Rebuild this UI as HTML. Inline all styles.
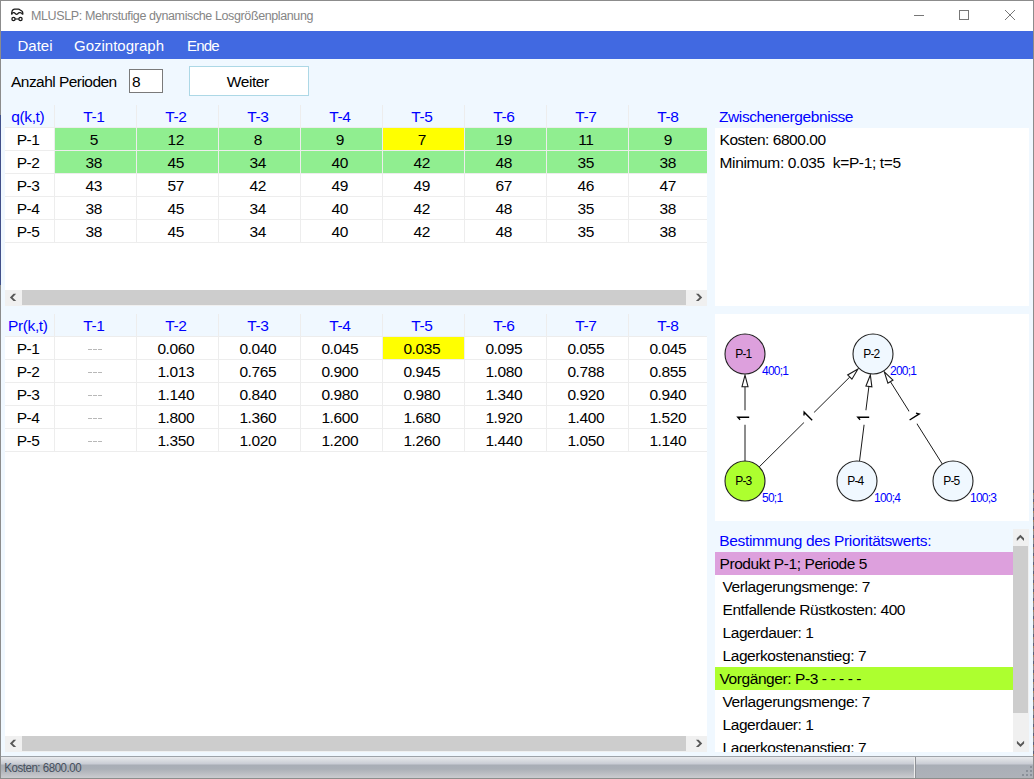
<!DOCTYPE html>
<html><head><meta charset="utf-8"><title>MLUSLP</title>
<style>
html,body{margin:0;padding:0}
body{width:1034px;height:779px;overflow:hidden;position:relative;background:#F0F8FF;font-family:"Liberation Sans", sans-serif}
.r{position:absolute}
.t{position:absolute;white-space:pre;line-height:normal}
</style></head><body>
<div class="r" style="left:0px;top:0px;width:1034px;height:31px;background:#fff;"></div>
<svg class="r" style="left:6px;top:5px" width="24" height="20" viewBox="0 0 24 20">
<path d="M5.7 9.6 V8 Q5.9 5.6 7.2 4.6 Q7.8 4.2 8.6 4.2 H12.3 Q13.3 4.2 14.2 5.0 Q15.0 5.6 15.8 6.0 Q16.8 6.6 16.8 8.2 V9.6" fill="none" stroke="#1a1a1a" stroke-width="1.3"/>
<path d="M5.7 9.4 C6.0 7.4, 8.4 7.0, 9.4 8.8 Q10.6 10.0 11.8 8.8 C12.8 7.0, 15.8 7.4, 16.6 9.4" fill="none" stroke="#1a1a1a" stroke-width="1.3"/>
<circle cx="7.5" cy="14" r="1.6" fill="none" stroke="#1a1a1a" stroke-width="1.3"/>
<circle cx="14.5" cy="14" r="1.6" fill="none" stroke="#1a1a1a" stroke-width="1.3"/>
<path d="M9 14 H13" stroke="#1a1a1a" stroke-width="1.1"/>
</svg>
<div class="t" style="left:31px;top:8.99px;font-size:12.5px;color:#858585;letter-spacing:-0.385px;">MLUSLP: Mehrstufige dynamische Losgrößenplanung</div>
<div class="r" style="left:914px;top:15px;width:10px;height:1px;background:#777;"></div>
<div class="r" style="left:959px;top:10px;width:8px;height:8px;border:1px solid #777"></div>
<svg class="r" style="left:1004px;top:9px" width="12" height="12" viewBox="0 0 12 12">
<path d="M1 1 L11 11 M11 1 L1 11" stroke="#777" stroke-width="1"/></svg>
<div class="r" style="left:0px;top:31px;width:1034px;height:28px;background:#4169E1;"></div>
<div class="t" style="left:17.5px;top:37.42px;font-size:15px;color:#fff;letter-spacing:0px;">Datei</div>
<div class="t" style="left:74px;top:37.42px;font-size:15px;color:#fff;letter-spacing:0px;">Gozintograph</div>
<div class="t" style="left:187px;top:37.42px;font-size:15px;color:#fff;letter-spacing:-0.8px;">Ende</div>
<div class="t" style="left:11px;top:72.97px;font-size:15.5px;color:#000;letter-spacing:-0.54px;">Anzahl Perioden</div>
<div class="r" style="left:129px;top:69px;width:32px;height:22px;border:1px solid #7a7a7a;background:#fff"></div>
<div class="t" style="left:132px;top:72.97px;font-size:15.5px;color:#000;letter-spacing:-0.4px;">8</div>
<div class="r" style="left:189px;top:66px;width:118px;height:28px;border:1px solid #ADD8E6;background:#fff"></div>
<div class="t" style="left:187.78px;width:120px;text-align:center;top:72.97px;font-size:15.5px;color:#000;letter-spacing:-0.44px;">Weiter</div>
<div class="r" style="left:0;top:0;width:707px;height:779px;overflow:hidden">
<div class="r" style="left:5px;top:128px;width:702px;height:162px;background:#fff;"></div>
<div class="r" style="left:54px;top:105px;width:1px;height:22px;background:#EDEDED;"></div>
<div class="r" style="left:136px;top:105px;width:1px;height:22px;background:#EDEDED;"></div>
<div class="r" style="left:218px;top:105px;width:1px;height:22px;background:#EDEDED;"></div>
<div class="r" style="left:300px;top:105px;width:1px;height:22px;background:#EDEDED;"></div>
<div class="r" style="left:382px;top:105px;width:1px;height:22px;background:#EDEDED;"></div>
<div class="r" style="left:464px;top:105px;width:1px;height:22px;background:#EDEDED;"></div>
<div class="r" style="left:546px;top:105px;width:1px;height:22px;background:#EDEDED;"></div>
<div class="r" style="left:628px;top:105px;width:1px;height:22px;background:#EDEDED;"></div>
<div class="r" style="left:5px;top:127px;width:702px;height:1px;background:#EDEDED;"></div>
<div class="t" style="left:2.80px;width:50px;text-align:center;top:107.77px;font-size:15.5px;color:#0000FF;letter-spacing:-0.4px;">q(k,t)</div>
<div class="t" style="left:53.80px;width:80px;text-align:center;top:107.77px;font-size:15.5px;color:#0000FF;letter-spacing:-0.4px;">T-1</div>
<div class="t" style="left:135.80px;width:80px;text-align:center;top:107.77px;font-size:15.5px;color:#0000FF;letter-spacing:-0.4px;">T-2</div>
<div class="t" style="left:217.80px;width:80px;text-align:center;top:107.77px;font-size:15.5px;color:#0000FF;letter-spacing:-0.4px;">T-3</div>
<div class="t" style="left:299.80px;width:80px;text-align:center;top:107.77px;font-size:15.5px;color:#0000FF;letter-spacing:-0.4px;">T-4</div>
<div class="t" style="left:381.80px;width:80px;text-align:center;top:107.77px;font-size:15.5px;color:#0000FF;letter-spacing:-0.4px;">T-5</div>
<div class="t" style="left:463.80px;width:80px;text-align:center;top:107.77px;font-size:15.5px;color:#0000FF;letter-spacing:-0.4px;">T-6</div>
<div class="t" style="left:545.80px;width:80px;text-align:center;top:107.77px;font-size:15.5px;color:#0000FF;letter-spacing:-0.4px;">T-7</div>
<div class="t" style="left:627.80px;width:80px;text-align:center;top:107.77px;font-size:15.5px;color:#0000FF;letter-spacing:-0.4px;">T-8</div>
<div class="r" style="left:55px;top:128px;width:81px;height:22px;background:#90EE90;"></div>
<div class="r" style="left:137px;top:128px;width:81px;height:22px;background:#90EE90;"></div>
<div class="r" style="left:219px;top:128px;width:81px;height:22px;background:#90EE90;"></div>
<div class="r" style="left:301px;top:128px;width:81px;height:22px;background:#90EE90;"></div>
<div class="r" style="left:383px;top:128px;width:81px;height:22px;background:#FFFF00;"></div>
<div class="r" style="left:465px;top:128px;width:81px;height:22px;background:#90EE90;"></div>
<div class="r" style="left:547px;top:128px;width:81px;height:22px;background:#90EE90;"></div>
<div class="r" style="left:629px;top:128px;width:81px;height:22px;background:#90EE90;"></div>
<div class="r" style="left:5px;top:150px;width:702px;height:1px;background:#EDEDED;"></div>
<div class="r" style="left:54px;top:128px;width:1px;height:23px;background:#EDEDED;"></div>
<div class="r" style="left:136px;top:128px;width:1px;height:23px;background:#EDEDED;"></div>
<div class="r" style="left:218px;top:128px;width:1px;height:23px;background:#EDEDED;"></div>
<div class="r" style="left:300px;top:128px;width:1px;height:23px;background:#EDEDED;"></div>
<div class="r" style="left:382px;top:128px;width:1px;height:23px;background:#EDEDED;"></div>
<div class="r" style="left:464px;top:128px;width:1px;height:23px;background:#EDEDED;"></div>
<div class="r" style="left:546px;top:128px;width:1px;height:23px;background:#EDEDED;"></div>
<div class="r" style="left:628px;top:128px;width:1px;height:23px;background:#EDEDED;"></div>
<div class="t" style="left:3.10px;width:50px;text-align:center;top:130.77px;font-size:15.5px;color:#000;letter-spacing:-0.4px;">P-1</div>
<div class="t" style="left:53.80px;width:80px;text-align:center;top:130.77px;font-size:15.5px;color:#000;letter-spacing:-0.4px;">5</div>
<div class="t" style="left:135.80px;width:80px;text-align:center;top:130.77px;font-size:15.5px;color:#000;letter-spacing:-0.4px;">12</div>
<div class="t" style="left:217.80px;width:80px;text-align:center;top:130.77px;font-size:15.5px;color:#000;letter-spacing:-0.4px;">8</div>
<div class="t" style="left:299.80px;width:80px;text-align:center;top:130.77px;font-size:15.5px;color:#000;letter-spacing:-0.4px;">9</div>
<div class="t" style="left:381.80px;width:80px;text-align:center;top:130.77px;font-size:15.5px;color:#000;letter-spacing:-0.4px;">7</div>
<div class="t" style="left:463.80px;width:80px;text-align:center;top:130.77px;font-size:15.5px;color:#000;letter-spacing:-0.4px;">19</div>
<div class="t" style="left:545.80px;width:80px;text-align:center;top:130.77px;font-size:15.5px;color:#000;letter-spacing:-0.4px;">11</div>
<div class="t" style="left:627.80px;width:80px;text-align:center;top:130.77px;font-size:15.5px;color:#000;letter-spacing:-0.4px;">9</div>
<div class="r" style="left:55px;top:151px;width:81px;height:22px;background:#90EE90;"></div>
<div class="r" style="left:137px;top:151px;width:81px;height:22px;background:#90EE90;"></div>
<div class="r" style="left:219px;top:151px;width:81px;height:22px;background:#90EE90;"></div>
<div class="r" style="left:301px;top:151px;width:81px;height:22px;background:#90EE90;"></div>
<div class="r" style="left:383px;top:151px;width:81px;height:22px;background:#90EE90;"></div>
<div class="r" style="left:465px;top:151px;width:81px;height:22px;background:#90EE90;"></div>
<div class="r" style="left:547px;top:151px;width:81px;height:22px;background:#90EE90;"></div>
<div class="r" style="left:629px;top:151px;width:81px;height:22px;background:#90EE90;"></div>
<div class="r" style="left:5px;top:173px;width:702px;height:1px;background:#EDEDED;"></div>
<div class="r" style="left:54px;top:151px;width:1px;height:23px;background:#EDEDED;"></div>
<div class="r" style="left:136px;top:151px;width:1px;height:23px;background:#EDEDED;"></div>
<div class="r" style="left:218px;top:151px;width:1px;height:23px;background:#EDEDED;"></div>
<div class="r" style="left:300px;top:151px;width:1px;height:23px;background:#EDEDED;"></div>
<div class="r" style="left:382px;top:151px;width:1px;height:23px;background:#EDEDED;"></div>
<div class="r" style="left:464px;top:151px;width:1px;height:23px;background:#EDEDED;"></div>
<div class="r" style="left:546px;top:151px;width:1px;height:23px;background:#EDEDED;"></div>
<div class="r" style="left:628px;top:151px;width:1px;height:23px;background:#EDEDED;"></div>
<div class="t" style="left:3.10px;width:50px;text-align:center;top:153.77px;font-size:15.5px;color:#000;letter-spacing:-0.4px;">P-2</div>
<div class="t" style="left:53.80px;width:80px;text-align:center;top:153.77px;font-size:15.5px;color:#000;letter-spacing:-0.4px;">38</div>
<div class="t" style="left:135.80px;width:80px;text-align:center;top:153.77px;font-size:15.5px;color:#000;letter-spacing:-0.4px;">45</div>
<div class="t" style="left:217.80px;width:80px;text-align:center;top:153.77px;font-size:15.5px;color:#000;letter-spacing:-0.4px;">34</div>
<div class="t" style="left:299.80px;width:80px;text-align:center;top:153.77px;font-size:15.5px;color:#000;letter-spacing:-0.4px;">40</div>
<div class="t" style="left:381.80px;width:80px;text-align:center;top:153.77px;font-size:15.5px;color:#000;letter-spacing:-0.4px;">42</div>
<div class="t" style="left:463.80px;width:80px;text-align:center;top:153.77px;font-size:15.5px;color:#000;letter-spacing:-0.4px;">48</div>
<div class="t" style="left:545.80px;width:80px;text-align:center;top:153.77px;font-size:15.5px;color:#000;letter-spacing:-0.4px;">35</div>
<div class="t" style="left:627.80px;width:80px;text-align:center;top:153.77px;font-size:15.5px;color:#000;letter-spacing:-0.4px;">38</div>
<div class="r" style="left:5px;top:196px;width:702px;height:1px;background:#EDEDED;"></div>
<div class="r" style="left:54px;top:174px;width:1px;height:23px;background:#EDEDED;"></div>
<div class="r" style="left:136px;top:174px;width:1px;height:23px;background:#EDEDED;"></div>
<div class="r" style="left:218px;top:174px;width:1px;height:23px;background:#EDEDED;"></div>
<div class="r" style="left:300px;top:174px;width:1px;height:23px;background:#EDEDED;"></div>
<div class="r" style="left:382px;top:174px;width:1px;height:23px;background:#EDEDED;"></div>
<div class="r" style="left:464px;top:174px;width:1px;height:23px;background:#EDEDED;"></div>
<div class="r" style="left:546px;top:174px;width:1px;height:23px;background:#EDEDED;"></div>
<div class="r" style="left:628px;top:174px;width:1px;height:23px;background:#EDEDED;"></div>
<div class="t" style="left:3.10px;width:50px;text-align:center;top:176.77px;font-size:15.5px;color:#000;letter-spacing:-0.4px;">P-3</div>
<div class="t" style="left:53.80px;width:80px;text-align:center;top:176.77px;font-size:15.5px;color:#000;letter-spacing:-0.4px;">43</div>
<div class="t" style="left:135.80px;width:80px;text-align:center;top:176.77px;font-size:15.5px;color:#000;letter-spacing:-0.4px;">57</div>
<div class="t" style="left:217.80px;width:80px;text-align:center;top:176.77px;font-size:15.5px;color:#000;letter-spacing:-0.4px;">42</div>
<div class="t" style="left:299.80px;width:80px;text-align:center;top:176.77px;font-size:15.5px;color:#000;letter-spacing:-0.4px;">49</div>
<div class="t" style="left:381.80px;width:80px;text-align:center;top:176.77px;font-size:15.5px;color:#000;letter-spacing:-0.4px;">49</div>
<div class="t" style="left:463.80px;width:80px;text-align:center;top:176.77px;font-size:15.5px;color:#000;letter-spacing:-0.4px;">67</div>
<div class="t" style="left:545.80px;width:80px;text-align:center;top:176.77px;font-size:15.5px;color:#000;letter-spacing:-0.4px;">46</div>
<div class="t" style="left:627.80px;width:80px;text-align:center;top:176.77px;font-size:15.5px;color:#000;letter-spacing:-0.4px;">47</div>
<div class="r" style="left:5px;top:219px;width:702px;height:1px;background:#EDEDED;"></div>
<div class="r" style="left:54px;top:197px;width:1px;height:23px;background:#EDEDED;"></div>
<div class="r" style="left:136px;top:197px;width:1px;height:23px;background:#EDEDED;"></div>
<div class="r" style="left:218px;top:197px;width:1px;height:23px;background:#EDEDED;"></div>
<div class="r" style="left:300px;top:197px;width:1px;height:23px;background:#EDEDED;"></div>
<div class="r" style="left:382px;top:197px;width:1px;height:23px;background:#EDEDED;"></div>
<div class="r" style="left:464px;top:197px;width:1px;height:23px;background:#EDEDED;"></div>
<div class="r" style="left:546px;top:197px;width:1px;height:23px;background:#EDEDED;"></div>
<div class="r" style="left:628px;top:197px;width:1px;height:23px;background:#EDEDED;"></div>
<div class="t" style="left:3.10px;width:50px;text-align:center;top:199.77px;font-size:15.5px;color:#000;letter-spacing:-0.4px;">P-4</div>
<div class="t" style="left:53.80px;width:80px;text-align:center;top:199.77px;font-size:15.5px;color:#000;letter-spacing:-0.4px;">38</div>
<div class="t" style="left:135.80px;width:80px;text-align:center;top:199.77px;font-size:15.5px;color:#000;letter-spacing:-0.4px;">45</div>
<div class="t" style="left:217.80px;width:80px;text-align:center;top:199.77px;font-size:15.5px;color:#000;letter-spacing:-0.4px;">34</div>
<div class="t" style="left:299.80px;width:80px;text-align:center;top:199.77px;font-size:15.5px;color:#000;letter-spacing:-0.4px;">40</div>
<div class="t" style="left:381.80px;width:80px;text-align:center;top:199.77px;font-size:15.5px;color:#000;letter-spacing:-0.4px;">42</div>
<div class="t" style="left:463.80px;width:80px;text-align:center;top:199.77px;font-size:15.5px;color:#000;letter-spacing:-0.4px;">48</div>
<div class="t" style="left:545.80px;width:80px;text-align:center;top:199.77px;font-size:15.5px;color:#000;letter-spacing:-0.4px;">35</div>
<div class="t" style="left:627.80px;width:80px;text-align:center;top:199.77px;font-size:15.5px;color:#000;letter-spacing:-0.4px;">38</div>
<div class="r" style="left:5px;top:242px;width:702px;height:1px;background:#EDEDED;"></div>
<div class="r" style="left:54px;top:220px;width:1px;height:23px;background:#EDEDED;"></div>
<div class="r" style="left:136px;top:220px;width:1px;height:23px;background:#EDEDED;"></div>
<div class="r" style="left:218px;top:220px;width:1px;height:23px;background:#EDEDED;"></div>
<div class="r" style="left:300px;top:220px;width:1px;height:23px;background:#EDEDED;"></div>
<div class="r" style="left:382px;top:220px;width:1px;height:23px;background:#EDEDED;"></div>
<div class="r" style="left:464px;top:220px;width:1px;height:23px;background:#EDEDED;"></div>
<div class="r" style="left:546px;top:220px;width:1px;height:23px;background:#EDEDED;"></div>
<div class="r" style="left:628px;top:220px;width:1px;height:23px;background:#EDEDED;"></div>
<div class="t" style="left:3.10px;width:50px;text-align:center;top:222.77px;font-size:15.5px;color:#000;letter-spacing:-0.4px;">P-5</div>
<div class="t" style="left:53.80px;width:80px;text-align:center;top:222.77px;font-size:15.5px;color:#000;letter-spacing:-0.4px;">38</div>
<div class="t" style="left:135.80px;width:80px;text-align:center;top:222.77px;font-size:15.5px;color:#000;letter-spacing:-0.4px;">45</div>
<div class="t" style="left:217.80px;width:80px;text-align:center;top:222.77px;font-size:15.5px;color:#000;letter-spacing:-0.4px;">34</div>
<div class="t" style="left:299.80px;width:80px;text-align:center;top:222.77px;font-size:15.5px;color:#000;letter-spacing:-0.4px;">40</div>
<div class="t" style="left:381.80px;width:80px;text-align:center;top:222.77px;font-size:15.5px;color:#000;letter-spacing:-0.4px;">42</div>
<div class="t" style="left:463.80px;width:80px;text-align:center;top:222.77px;font-size:15.5px;color:#000;letter-spacing:-0.4px;">48</div>
<div class="t" style="left:545.80px;width:80px;text-align:center;top:222.77px;font-size:15.5px;color:#000;letter-spacing:-0.4px;">35</div>
<div class="t" style="left:627.80px;width:80px;text-align:center;top:222.77px;font-size:15.5px;color:#000;letter-spacing:-0.4px;">38</div>
</div>
<div class="r" style="left:5px;top:290px;width:702px;height:16px;background:#F0F0F0;"></div>
<div class="r" style="left:22px;top:290px;width:664px;height:15px;background:#CDCDCD;"></div>
<svg class="r" style="left:8px;top:292px" width="10" height="11"><polygon points="8.20,1.80 4.60,5.40 8.20,9.00 5.50,9.00 1.90,5.40 5.50,1.80" fill="#585858"/></svg>
<svg class="r" style="left:694px;top:292px" width="10" height="11"><polygon points="1.90,1.80 5.50,5.40 1.90,9.00 4.60,9.00 8.20,5.40 4.60,1.80" fill="#585858"/></svg>
<div class="r" style="left:0;top:0;width:707px;height:779px;overflow:hidden">
<div class="r" style="left:5px;top:337px;width:702px;height:399px;background:#fff;"></div>
<div class="r" style="left:54px;top:314px;width:1px;height:22px;background:#EDEDED;"></div>
<div class="r" style="left:136px;top:314px;width:1px;height:22px;background:#EDEDED;"></div>
<div class="r" style="left:218px;top:314px;width:1px;height:22px;background:#EDEDED;"></div>
<div class="r" style="left:300px;top:314px;width:1px;height:22px;background:#EDEDED;"></div>
<div class="r" style="left:382px;top:314px;width:1px;height:22px;background:#EDEDED;"></div>
<div class="r" style="left:464px;top:314px;width:1px;height:22px;background:#EDEDED;"></div>
<div class="r" style="left:546px;top:314px;width:1px;height:22px;background:#EDEDED;"></div>
<div class="r" style="left:628px;top:314px;width:1px;height:22px;background:#EDEDED;"></div>
<div class="r" style="left:5px;top:336px;width:702px;height:1px;background:#EDEDED;"></div>
<div class="t" style="left:2.80px;width:50px;text-align:center;top:316.77px;font-size:15.5px;color:#0000FF;letter-spacing:-0.4px;">Pr(k,t)</div>
<div class="t" style="left:53.80px;width:80px;text-align:center;top:316.77px;font-size:15.5px;color:#0000FF;letter-spacing:-0.4px;">T-1</div>
<div class="t" style="left:135.80px;width:80px;text-align:center;top:316.77px;font-size:15.5px;color:#0000FF;letter-spacing:-0.4px;">T-2</div>
<div class="t" style="left:217.80px;width:80px;text-align:center;top:316.77px;font-size:15.5px;color:#0000FF;letter-spacing:-0.4px;">T-3</div>
<div class="t" style="left:299.80px;width:80px;text-align:center;top:316.77px;font-size:15.5px;color:#0000FF;letter-spacing:-0.4px;">T-4</div>
<div class="t" style="left:381.80px;width:80px;text-align:center;top:316.77px;font-size:15.5px;color:#0000FF;letter-spacing:-0.4px;">T-5</div>
<div class="t" style="left:463.80px;width:80px;text-align:center;top:316.77px;font-size:15.5px;color:#0000FF;letter-spacing:-0.4px;">T-6</div>
<div class="t" style="left:545.80px;width:80px;text-align:center;top:316.77px;font-size:15.5px;color:#0000FF;letter-spacing:-0.4px;">T-7</div>
<div class="t" style="left:627.80px;width:80px;text-align:center;top:316.77px;font-size:15.5px;color:#0000FF;letter-spacing:-0.4px;">T-8</div>
<div class="r" style="left:383px;top:337px;width:81px;height:22px;background:#FFFF00;"></div>
<div class="r" style="left:5px;top:359px;width:702px;height:1px;background:#EDEDED;"></div>
<div class="r" style="left:54px;top:337px;width:1px;height:23px;background:#EDEDED;"></div>
<div class="r" style="left:136px;top:337px;width:1px;height:23px;background:#EDEDED;"></div>
<div class="r" style="left:218px;top:337px;width:1px;height:23px;background:#EDEDED;"></div>
<div class="r" style="left:300px;top:337px;width:1px;height:23px;background:#EDEDED;"></div>
<div class="r" style="left:382px;top:337px;width:1px;height:23px;background:#EDEDED;"></div>
<div class="r" style="left:464px;top:337px;width:1px;height:23px;background:#EDEDED;"></div>
<div class="r" style="left:546px;top:337px;width:1px;height:23px;background:#EDEDED;"></div>
<div class="r" style="left:628px;top:337px;width:1px;height:23px;background:#EDEDED;"></div>
<div class="t" style="left:3.10px;width:50px;text-align:center;top:339.77px;font-size:15.5px;color:#000;letter-spacing:-0.4px;">P-1</div>
<div class="r" style="left:88px;top:349px;width:4px;height:1px;background:#b8b8b8;"></div>
<div class="r" style="left:93px;top:349px;width:4px;height:1px;background:#b8b8b8;"></div>
<div class="r" style="left:98px;top:349px;width:4px;height:1px;background:#b8b8b8;"></div>
<div class="t" style="left:135.80px;width:80px;text-align:center;top:339.77px;font-size:15.5px;color:#000;letter-spacing:-0.4px;">0.060</div>
<div class="t" style="left:217.80px;width:80px;text-align:center;top:339.77px;font-size:15.5px;color:#000;letter-spacing:-0.4px;">0.040</div>
<div class="t" style="left:299.80px;width:80px;text-align:center;top:339.77px;font-size:15.5px;color:#000;letter-spacing:-0.4px;">0.045</div>
<div class="t" style="left:381.80px;width:80px;text-align:center;top:339.77px;font-size:15.5px;color:#000;letter-spacing:-0.4px;">0.035</div>
<div class="t" style="left:463.80px;width:80px;text-align:center;top:339.77px;font-size:15.5px;color:#000;letter-spacing:-0.4px;">0.095</div>
<div class="t" style="left:545.80px;width:80px;text-align:center;top:339.77px;font-size:15.5px;color:#000;letter-spacing:-0.4px;">0.055</div>
<div class="t" style="left:627.80px;width:80px;text-align:center;top:339.77px;font-size:15.5px;color:#000;letter-spacing:-0.4px;">0.045</div>
<div class="r" style="left:5px;top:382px;width:702px;height:1px;background:#EDEDED;"></div>
<div class="r" style="left:54px;top:360px;width:1px;height:23px;background:#EDEDED;"></div>
<div class="r" style="left:136px;top:360px;width:1px;height:23px;background:#EDEDED;"></div>
<div class="r" style="left:218px;top:360px;width:1px;height:23px;background:#EDEDED;"></div>
<div class="r" style="left:300px;top:360px;width:1px;height:23px;background:#EDEDED;"></div>
<div class="r" style="left:382px;top:360px;width:1px;height:23px;background:#EDEDED;"></div>
<div class="r" style="left:464px;top:360px;width:1px;height:23px;background:#EDEDED;"></div>
<div class="r" style="left:546px;top:360px;width:1px;height:23px;background:#EDEDED;"></div>
<div class="r" style="left:628px;top:360px;width:1px;height:23px;background:#EDEDED;"></div>
<div class="t" style="left:3.10px;width:50px;text-align:center;top:362.77px;font-size:15.5px;color:#000;letter-spacing:-0.4px;">P-2</div>
<div class="r" style="left:88px;top:372px;width:4px;height:1px;background:#b8b8b8;"></div>
<div class="r" style="left:93px;top:372px;width:4px;height:1px;background:#b8b8b8;"></div>
<div class="r" style="left:98px;top:372px;width:4px;height:1px;background:#b8b8b8;"></div>
<div class="t" style="left:135.80px;width:80px;text-align:center;top:362.77px;font-size:15.5px;color:#000;letter-spacing:-0.4px;">1.013</div>
<div class="t" style="left:217.80px;width:80px;text-align:center;top:362.77px;font-size:15.5px;color:#000;letter-spacing:-0.4px;">0.765</div>
<div class="t" style="left:299.80px;width:80px;text-align:center;top:362.77px;font-size:15.5px;color:#000;letter-spacing:-0.4px;">0.900</div>
<div class="t" style="left:381.80px;width:80px;text-align:center;top:362.77px;font-size:15.5px;color:#000;letter-spacing:-0.4px;">0.945</div>
<div class="t" style="left:463.80px;width:80px;text-align:center;top:362.77px;font-size:15.5px;color:#000;letter-spacing:-0.4px;">1.080</div>
<div class="t" style="left:545.80px;width:80px;text-align:center;top:362.77px;font-size:15.5px;color:#000;letter-spacing:-0.4px;">0.788</div>
<div class="t" style="left:627.80px;width:80px;text-align:center;top:362.77px;font-size:15.5px;color:#000;letter-spacing:-0.4px;">0.855</div>
<div class="r" style="left:5px;top:405px;width:702px;height:1px;background:#EDEDED;"></div>
<div class="r" style="left:54px;top:383px;width:1px;height:23px;background:#EDEDED;"></div>
<div class="r" style="left:136px;top:383px;width:1px;height:23px;background:#EDEDED;"></div>
<div class="r" style="left:218px;top:383px;width:1px;height:23px;background:#EDEDED;"></div>
<div class="r" style="left:300px;top:383px;width:1px;height:23px;background:#EDEDED;"></div>
<div class="r" style="left:382px;top:383px;width:1px;height:23px;background:#EDEDED;"></div>
<div class="r" style="left:464px;top:383px;width:1px;height:23px;background:#EDEDED;"></div>
<div class="r" style="left:546px;top:383px;width:1px;height:23px;background:#EDEDED;"></div>
<div class="r" style="left:628px;top:383px;width:1px;height:23px;background:#EDEDED;"></div>
<div class="t" style="left:3.10px;width:50px;text-align:center;top:385.77px;font-size:15.5px;color:#000;letter-spacing:-0.4px;">P-3</div>
<div class="r" style="left:88px;top:395px;width:4px;height:1px;background:#b8b8b8;"></div>
<div class="r" style="left:93px;top:395px;width:4px;height:1px;background:#b8b8b8;"></div>
<div class="r" style="left:98px;top:395px;width:4px;height:1px;background:#b8b8b8;"></div>
<div class="t" style="left:135.80px;width:80px;text-align:center;top:385.77px;font-size:15.5px;color:#000;letter-spacing:-0.4px;">1.140</div>
<div class="t" style="left:217.80px;width:80px;text-align:center;top:385.77px;font-size:15.5px;color:#000;letter-spacing:-0.4px;">0.840</div>
<div class="t" style="left:299.80px;width:80px;text-align:center;top:385.77px;font-size:15.5px;color:#000;letter-spacing:-0.4px;">0.980</div>
<div class="t" style="left:381.80px;width:80px;text-align:center;top:385.77px;font-size:15.5px;color:#000;letter-spacing:-0.4px;">0.980</div>
<div class="t" style="left:463.80px;width:80px;text-align:center;top:385.77px;font-size:15.5px;color:#000;letter-spacing:-0.4px;">1.340</div>
<div class="t" style="left:545.80px;width:80px;text-align:center;top:385.77px;font-size:15.5px;color:#000;letter-spacing:-0.4px;">0.920</div>
<div class="t" style="left:627.80px;width:80px;text-align:center;top:385.77px;font-size:15.5px;color:#000;letter-spacing:-0.4px;">0.940</div>
<div class="r" style="left:5px;top:428px;width:702px;height:1px;background:#EDEDED;"></div>
<div class="r" style="left:54px;top:406px;width:1px;height:23px;background:#EDEDED;"></div>
<div class="r" style="left:136px;top:406px;width:1px;height:23px;background:#EDEDED;"></div>
<div class="r" style="left:218px;top:406px;width:1px;height:23px;background:#EDEDED;"></div>
<div class="r" style="left:300px;top:406px;width:1px;height:23px;background:#EDEDED;"></div>
<div class="r" style="left:382px;top:406px;width:1px;height:23px;background:#EDEDED;"></div>
<div class="r" style="left:464px;top:406px;width:1px;height:23px;background:#EDEDED;"></div>
<div class="r" style="left:546px;top:406px;width:1px;height:23px;background:#EDEDED;"></div>
<div class="r" style="left:628px;top:406px;width:1px;height:23px;background:#EDEDED;"></div>
<div class="t" style="left:3.10px;width:50px;text-align:center;top:408.77px;font-size:15.5px;color:#000;letter-spacing:-0.4px;">P-4</div>
<div class="r" style="left:88px;top:418px;width:4px;height:1px;background:#b8b8b8;"></div>
<div class="r" style="left:93px;top:418px;width:4px;height:1px;background:#b8b8b8;"></div>
<div class="r" style="left:98px;top:418px;width:4px;height:1px;background:#b8b8b8;"></div>
<div class="t" style="left:135.80px;width:80px;text-align:center;top:408.77px;font-size:15.5px;color:#000;letter-spacing:-0.4px;">1.800</div>
<div class="t" style="left:217.80px;width:80px;text-align:center;top:408.77px;font-size:15.5px;color:#000;letter-spacing:-0.4px;">1.360</div>
<div class="t" style="left:299.80px;width:80px;text-align:center;top:408.77px;font-size:15.5px;color:#000;letter-spacing:-0.4px;">1.600</div>
<div class="t" style="left:381.80px;width:80px;text-align:center;top:408.77px;font-size:15.5px;color:#000;letter-spacing:-0.4px;">1.680</div>
<div class="t" style="left:463.80px;width:80px;text-align:center;top:408.77px;font-size:15.5px;color:#000;letter-spacing:-0.4px;">1.920</div>
<div class="t" style="left:545.80px;width:80px;text-align:center;top:408.77px;font-size:15.5px;color:#000;letter-spacing:-0.4px;">1.400</div>
<div class="t" style="left:627.80px;width:80px;text-align:center;top:408.77px;font-size:15.5px;color:#000;letter-spacing:-0.4px;">1.520</div>
<div class="r" style="left:5px;top:451px;width:702px;height:1px;background:#EDEDED;"></div>
<div class="r" style="left:54px;top:429px;width:1px;height:23px;background:#EDEDED;"></div>
<div class="r" style="left:136px;top:429px;width:1px;height:23px;background:#EDEDED;"></div>
<div class="r" style="left:218px;top:429px;width:1px;height:23px;background:#EDEDED;"></div>
<div class="r" style="left:300px;top:429px;width:1px;height:23px;background:#EDEDED;"></div>
<div class="r" style="left:382px;top:429px;width:1px;height:23px;background:#EDEDED;"></div>
<div class="r" style="left:464px;top:429px;width:1px;height:23px;background:#EDEDED;"></div>
<div class="r" style="left:546px;top:429px;width:1px;height:23px;background:#EDEDED;"></div>
<div class="r" style="left:628px;top:429px;width:1px;height:23px;background:#EDEDED;"></div>
<div class="t" style="left:3.10px;width:50px;text-align:center;top:431.77px;font-size:15.5px;color:#000;letter-spacing:-0.4px;">P-5</div>
<div class="r" style="left:88px;top:441px;width:4px;height:1px;background:#b8b8b8;"></div>
<div class="r" style="left:93px;top:441px;width:4px;height:1px;background:#b8b8b8;"></div>
<div class="r" style="left:98px;top:441px;width:4px;height:1px;background:#b8b8b8;"></div>
<div class="t" style="left:135.80px;width:80px;text-align:center;top:431.77px;font-size:15.5px;color:#000;letter-spacing:-0.4px;">1.350</div>
<div class="t" style="left:217.80px;width:80px;text-align:center;top:431.77px;font-size:15.5px;color:#000;letter-spacing:-0.4px;">1.020</div>
<div class="t" style="left:299.80px;width:80px;text-align:center;top:431.77px;font-size:15.5px;color:#000;letter-spacing:-0.4px;">1.200</div>
<div class="t" style="left:381.80px;width:80px;text-align:center;top:431.77px;font-size:15.5px;color:#000;letter-spacing:-0.4px;">1.260</div>
<div class="t" style="left:463.80px;width:80px;text-align:center;top:431.77px;font-size:15.5px;color:#000;letter-spacing:-0.4px;">1.440</div>
<div class="t" style="left:545.80px;width:80px;text-align:center;top:431.77px;font-size:15.5px;color:#000;letter-spacing:-0.4px;">1.050</div>
<div class="t" style="left:627.80px;width:80px;text-align:center;top:431.77px;font-size:15.5px;color:#000;letter-spacing:-0.4px;">1.140</div>
</div>
<div class="r" style="left:5px;top:736px;width:702px;height:16px;background:#F0F0F0;"></div>
<div class="r" style="left:22px;top:736px;width:664px;height:15px;background:#CDCDCD;"></div>
<svg class="r" style="left:8px;top:738px" width="10" height="11"><polygon points="8.20,1.80 4.60,5.40 8.20,9.00 5.50,9.00 1.90,5.40 5.50,1.80" fill="#585858"/></svg>
<svg class="r" style="left:694px;top:738px" width="10" height="11"><polygon points="1.90,1.80 5.50,5.40 1.90,9.00 4.60,9.00 8.20,5.40 4.60,1.80" fill="#585858"/></svg>
<div class="t" style="left:719px;top:107.97px;font-size:15.5px;color:#0000FF;letter-spacing:-0.4px;">Zwischenergebnisse</div>
<div class="r" style="left:715px;top:128px;width:314px;height:178px;background:#fff;"></div>
<div class="t" style="left:719.5px;top:130.97px;font-size:15.5px;color:#000;letter-spacing:-0.45px;">Kosten: 6800.00</div>
<div class="t" style="left:719.5px;top:154.27px;font-size:15.5px;color:#000;letter-spacing:-0.35px;">Minimum: 0.035&nbsp; k=P-1; t=5</div>
<div class="r" style="left:715px;top:314px;width:314px;height:207px;background:#fff;"></div>
<svg class="r" style="left:715px;top:314px" width="314" height="207" viewBox="715 314 314 207">
<line x1="745.00" y1="461.00" x2="745.00" y2="386.70" stroke="#1a1a1a" stroke-width="1"/>
<polygon points="745.00,375.20 748.00,386.70 742.00,386.70" fill="#fff" stroke="#1a1a1a" stroke-width="1.1" stroke-linejoin="miter"/>
<g transform="translate(745.00,417.50) rotate(-90.00)"><rect x="-7.25" y="-6" width="14.5" height="12" fill="#fff"/></g>
<g transform="translate(745.00,417.50) rotate(-90.00)"><path d="M0.3 4.2 V-7.2 L-2.2 -4.9" fill="none" stroke="#000" stroke-width="1.35" stroke-linejoin="miter"/></g>
<line x1="759.20" y1="466.91" x2="849.79" y2="377.03" stroke="#1a1a1a" stroke-width="1"/>
<polygon points="857.95,368.93 851.90,379.16 847.67,374.90" fill="#fff" stroke="#1a1a1a" stroke-width="1.1" stroke-linejoin="miter"/>
<g transform="translate(809.00,417.50) rotate(-44.78)"><rect x="-7.25" y="-6" width="14.5" height="12" fill="#fff"/></g>
<g transform="translate(809.00,417.50) rotate(-44.78)"><path d="M0.3 4.2 V-7.2 L-2.2 -4.9" fill="none" stroke="#000" stroke-width="1.35" stroke-linejoin="miter"/></g>
<line x1="859.50" y1="461.16" x2="868.91" y2="386.44" stroke="#1a1a1a" stroke-width="1"/>
<polygon points="870.35,375.03 871.89,386.82 865.94,386.07" fill="#fff" stroke="#1a1a1a" stroke-width="1.1" stroke-linejoin="miter"/>
<g transform="translate(865.00,417.50) rotate(-82.82)"><rect x="-7.25" y="-6" width="14.5" height="12" fill="#fff"/></g>
<g transform="translate(865.00,417.50) rotate(-90.00)"><path d="M0.3 4.2 V-7.2 L-2.2 -4.9" fill="none" stroke="#000" stroke-width="1.35" stroke-linejoin="miter"/></g>
<line x1="942.34" y1="464.08" x2="890.43" y2="381.67" stroke="#1a1a1a" stroke-width="1"/>
<polygon points="884.30,371.94 892.97,380.07 887.89,383.27" fill="#fff" stroke="#1a1a1a" stroke-width="1.1" stroke-linejoin="miter"/>
<g transform="translate(913.00,417.50) rotate(57.79)"><rect x="-7.25" y="-6" width="14.5" height="12" fill="#fff"/></g>
<g transform="translate(913.00,417.50) rotate(57.79)"><path d="M0.3 4.2 V-7.2 L-2.2 -4.9" fill="none" stroke="#000" stroke-width="1.35" stroke-linejoin="miter"/></g>
<circle cx="745" cy="354" r="20" fill="#DDA0DD" stroke="#222" stroke-width="1.1"/>
<text x="735.3" y="358" font-size="12" letter-spacing="-0.9" font-family="Liberation Sans" fill="#000">P-1</text>
<text x="762" y="375" font-size="12" letter-spacing="-0.75" font-family="Liberation Sans" fill="#0000FF">400;1</text>
<circle cx="873" cy="354" r="20" fill="#F0F8FF" stroke="#222" stroke-width="1.1"/>
<text x="863.3" y="358" font-size="12" letter-spacing="-0.9" font-family="Liberation Sans" fill="#000">P-2</text>
<text x="890" y="375" font-size="12" letter-spacing="-0.75" font-family="Liberation Sans" fill="#0000FF">200;1</text>
<circle cx="745" cy="481" r="20" fill="#ADFF2F" stroke="#222" stroke-width="1.1"/>
<text x="735.3" y="485" font-size="12" letter-spacing="-0.9" font-family="Liberation Sans" fill="#000">P-3</text>
<text x="762" y="502" font-size="12" letter-spacing="-0.75" font-family="Liberation Sans" fill="#0000FF">50;1</text>
<circle cx="857" cy="481" r="20" fill="#F0F8FF" stroke="#222" stroke-width="1.1"/>
<text x="847.3" y="485" font-size="12" letter-spacing="-0.9" font-family="Liberation Sans" fill="#000">P-4</text>
<text x="874" y="502" font-size="12" letter-spacing="-0.75" font-family="Liberation Sans" fill="#0000FF">100;4</text>
<circle cx="953" cy="481" r="20" fill="#F0F8FF" stroke="#222" stroke-width="1.1"/>
<text x="943.3" y="485" font-size="12" letter-spacing="-0.9" font-family="Liberation Sans" fill="#000">P-5</text>
<text x="970" y="502" font-size="12" letter-spacing="-0.75" font-family="Liberation Sans" fill="#0000FF">100;3</text>
</svg>
<div class="r" style="left:715px;top:552px;width:298px;height:200px;background:#fff;"></div>
<div class="t" style="left:719.2px;top:532.17px;font-size:15.5px;color:#0000FF;letter-spacing:-0.33px;">Bestimmung des Prioritätswerts:</div>
<div class="r" style="left:715px;top:552px;width:298px;height:200px;overflow:hidden">
<div class="r" style="left:0;top:0px;width:298px;height:23px;background:#DDA0DD"></div>
<div class="t" style="left:4.5px;top:3.07px;font-size:15.5px;letter-spacing:-0.42px;color:#000">Produkt P-1; Periode 5</div>
<div class="t" style="left:7.5px;top:26.07px;font-size:15.5px;letter-spacing:-0.42px;color:#000">Verlagerungsmenge: 7</div>
<div class="t" style="left:7.5px;top:49.07px;font-size:15.5px;letter-spacing:-0.42px;color:#000">Entfallende Rüstkosten: 400</div>
<div class="t" style="left:7.5px;top:72.07px;font-size:15.5px;letter-spacing:-0.42px;color:#000">Lagerdauer: 1</div>
<div class="t" style="left:7.5px;top:95.07px;font-size:15.5px;letter-spacing:-0.42px;color:#000">Lagerkostenanstieg: 7</div>
<div class="r" style="left:0;top:115px;width:298px;height:23px;background:#ADFF2F"></div>
<div class="t" style="left:4.5px;top:118.07px;font-size:15.5px;letter-spacing:-0.42px;color:#000">Vorgänger: P-3 - - - - -</div>
<div class="t" style="left:7.5px;top:141.07px;font-size:15.5px;letter-spacing:-0.42px;color:#000">Verlagerungsmenge: 7</div>
<div class="t" style="left:7.5px;top:164.07px;font-size:15.5px;letter-spacing:-0.42px;color:#000">Lagerdauer: 1</div>
<div class="t" style="left:7.5px;top:187.07px;font-size:15.5px;letter-spacing:-0.42px;color:#000">Lagerkostenanstieg: 7</div>
</div>
<div class="r" style="left:1013px;top:529px;width:16px;height:223px;background:#F0F0F0;"></div>
<div class="r" style="left:1013px;top:546px;width:15px;height:167px;background:#CDCDCD;"></div>
<svg class="r" style="left:1015px;top:533px" width="11" height="10"><polygon points="1.80,8.00 5.40,4.40 9.00,8.00 9.00,5.30 5.40,1.70 1.80,5.30" fill="#585858"/></svg>
<svg class="r" style="left:1015px;top:739px" width="11" height="10"><polygon points="1.90,1.70 5.50,5.30 9.10,1.70 9.10,4.40 5.50,8.00 1.90,4.40" fill="#585858"/></svg>
<div class="r" style="left:0px;top:756px;width:1034px;height:1px;background:#9ea3a9;"></div>
<div class="r" style="left:0px;top:757px;width:914px;height:21px;background:linear-gradient(to bottom,#e9eaed 0px,#d6d9de 4px,#c9ccd4 7px,#a9aeb6 8px,#abb0b7 12px,#c0c2c7 18px,#cbccd0 21px);"></div>
<div class="r" style="left:916px;top:757px;width:118px;height:21px;background:linear-gradient(to bottom,#e9eaed 0px,#d6d9de 4px,#c9ccd4 7px,#a9aeb6 8px,#aeb2b9 21px);"></div>
<div class="r" style="left:914px;top:757px;width:1px;height:21px;background:#eeeeee;"></div>
<div class="r" style="left:915px;top:757px;width:1px;height:21px;background:#8e9196;"></div>
<div class="r" style="left:0px;top:778px;width:1034px;height:1px;background:#8c8e8c;"></div>
<div class="t" style="left:4.3px;top:761.59px;font-size:11.5px;color:#46505e;letter-spacing:-0.46px;transform:scaleY(1.14);transform-origin:0 10.41px;">Kosten: 6800.00</div>
<div class="r" style="left:1030px;top:766px;width:2px;height:2px;background:#8a9099;"></div>
<div class="r" style="left:1026px;top:770px;width:2px;height:2px;background:#8a9099;"></div>
<div class="r" style="left:1030px;top:770px;width:2px;height:2px;background:#8a9099;"></div>
<div class="r" style="left:1022px;top:774px;width:2px;height:2px;background:#8a9099;"></div>
<div class="r" style="left:1026px;top:774px;width:2px;height:2px;background:#8a9099;"></div>
<div class="r" style="left:1030px;top:774px;width:2px;height:2px;background:#8a9099;"></div>
<div class="r" style="left:0px;top:0px;width:1034px;height:1px;background:#8c8c8c;"></div>
<div class="r" style="left:0px;top:0px;width:1px;height:779px;background:#8c8c8c;"></div>
<div class="r" style="left:0px;top:115px;width:1px;height:170px;background:#41508a;"></div>
<div class="r" style="left:1033px;top:0px;width:1px;height:779px;background:#8c8c8c;"></div>
<div class="r" style="left:1033px;top:490px;width:1px;height:270px;background:repeating-linear-gradient(to bottom,#5a5f7a 0px,#5a5f7a 3px,#a08060 3px,#a08060 5px,#8c8c8c 5px,#8c8c8c 9px);"></div>
</body></html>
